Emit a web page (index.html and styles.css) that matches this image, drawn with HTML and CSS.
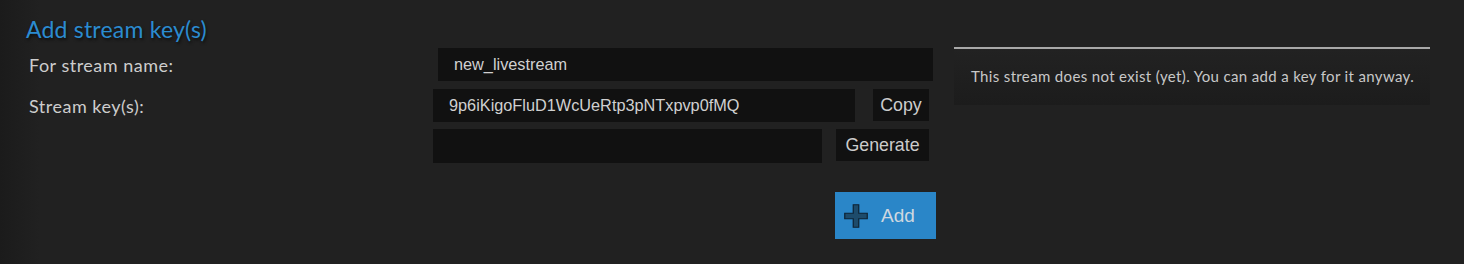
FILE: index.html
```html
<!DOCTYPE html>
<html>
<head>
<meta charset="utf-8">
<link rel="stylesheet" href="styles.css">
</head>
<body>
<div class="page">
  <h2 class="title">Add stream key(s)</h2>
  <div class="content">
    <div class="form">
      <div class="row row1">
        <label class="label">For stream name:</label>
        <div class="field"><input class="input input-name" type="text" value="new_livestream"></div>
      </div>
      <div class="row row2">
        <label class="label">Stream key(s):</label>
        <div class="field">
          <input class="input input-key" type="text" value="9p6iKigoFluD1WcUeRtp3pNTxpvp0fMQ">
          <button class="btn btn-copy">Copy</button>
        </div>
      </div>
      <div class="row row3">
        <span class="label"></span>
        <div class="field">
          <input class="input input-new" type="text" value="">
          <button class="btn btn-gen">Generate</button>
        </div>
      </div>
      <div class="row row4">
        <span class="label"></span>
        <div class="field field-add">
          <button class="btn-add">
            <svg class="plus" width="24" height="24" viewBox="0 0 24 24">
              <path d="M9.25 0.75h5.5v8.5h8.5v5.5h-8.5v8.5h-5.5v-8.5H0.75v-5.5h8.5z" fill="#1d4b6b" stroke="#0e2233" stroke-width="1.2"/>
            </svg>
            <span>Add</span>
          </button>
        </div>
      </div>
    </div>
    <div class="panel">
      <p class="panel-text">This stream does not exist (yet). You can add a key for it anyway.</p>
    </div>
  </div>
</div>
</body>
</html>
```
FILE: styles.css
```css
html, body {
  margin: 0;
  padding: 0;
  background: #212121;
}
body {
  width: 1464px;
  height: 264px;
  overflow: hidden;
  font-family: "Lato", "Open Sans", sans-serif;
  color: #cfcfcf;
}
.page {
  height: 264px;
  box-sizing: border-box;
  padding: 16px 0 0 26px;
  background: linear-gradient(to right, #1b1b1b 0px, #212121 40px);
}
.title {
  margin: 0;
  font-weight: 400;
  font-size: 23px;
  letter-spacing: 0.2px;
  line-height: 26px;
  color: #2b8bd0;
  text-shadow: 1px 2px 3px rgba(0,0,0,0.6);
}
.content {
  display: flex;
  margin-top: 6px;
}
.form {
  width: 910px;
  display: flex;
  flex-direction: column;
}
.row {
  display: flex;
  align-items: center;
}
.label {
  width: 404px;
  padding-left: 3px;
  font-size: 18px;
  letter-spacing: 0.5px;
  color: #cdcdcd;
  flex: none;
}
.field {
  display: flex;
  align-items: center;
}
.row1 { height: 33px; }
.row2 { height: 33px; margin-top: 8px; }
.row3 { height: 34px; margin-top: 7px; }
.row4 { margin-top: 29px; }
.input {
  box-sizing: border-box;
  border: none;
  outline: none;
  background: #111111;
  color: #d0d0d0;
  font-family: "Liberation Sans", Arial, sans-serif;
  font-size: 16.3px;
  padding: 0 16px;
  margin: 0;
}
.input-name {
  width: 495px;
  height: 33px;
  margin-left: 5px;
}
.input-key {
  width: 422px;
  height: 33px;
}
.input-new {
  width: 389px;
  height: 34px;
}
.btn {
  box-sizing: border-box;
  border: none;
  background: #111111;
  color: #cccccc;
  font-family: "Liberation Sans", Arial, sans-serif;
  font-size: 17.8px;
  height: 32px;
  padding: 0;
  margin: 0;
  align-self: flex-start;
}
.btn-copy {
  width: 56px;
  margin-left: 18px;
}
.btn-gen {
  width: 93px;
  margin-left: 14px;
}
.field-add {
  padding-left: 402px;
}
.btn-add {
  box-sizing: border-box;
  width: 101px;
  height: 47px;
  border: none;
  background: #2a86c8;
  color: #cfd8e0;
  font-family: "Liberation Sans", Arial, sans-serif;
  font-size: 19px;
  display: flex;
  align-items: center;
  padding: 0 0 0 9px;
  margin: 0;
}
.plus {
  flex: none;
  margin-right: 13px;
}
.panel {
  box-sizing: border-box;
  width: 476px;
  height: 58px;
  margin-left: 18px;
  margin-top: -1px;
  border-top: 2px solid #a8a8a8;
  background: linear-gradient(to bottom, #222222, #1c1c1c);
  display: flex;
  align-items: center;
  padding: 0 0 2px 17px;
}
.panel-text {
  margin: 0;
  font-size: 15px;
  letter-spacing: 0.35px;
  color: #c8c8c8;
}
```
